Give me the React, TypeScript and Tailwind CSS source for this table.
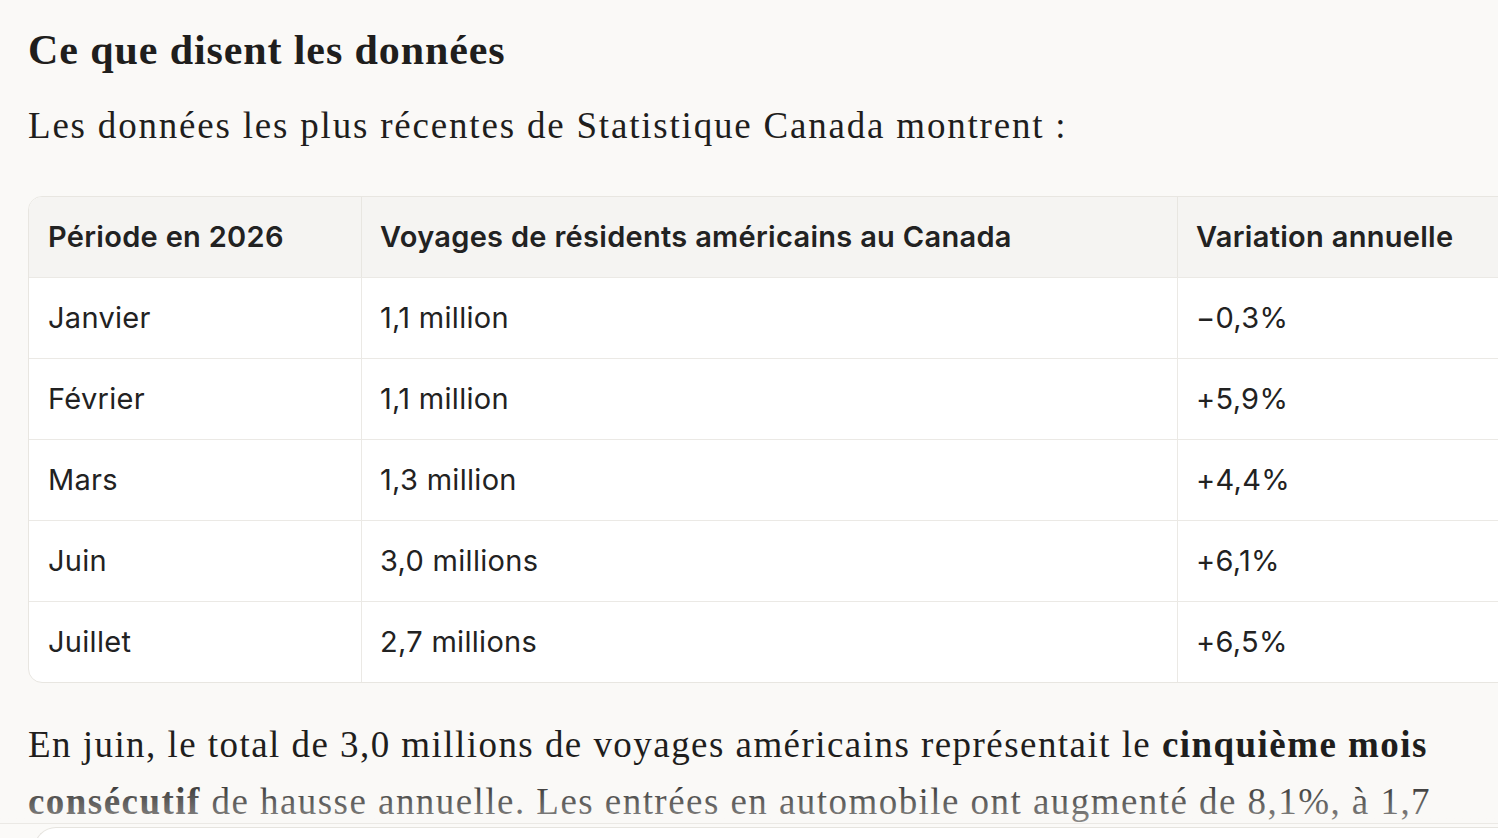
import React from 'react';

const rows = [
  { period: 'Janvier', trips: '1,1 million', change: '−0,3%' },
  { period: 'Février', trips: '1,1 million', change: '+5,9%' },
  { period: 'Mars', trips: '1,3 million', change: '+4,4%' },
  { period: 'Juin', trips: '3,0 millions', change: '+6,1%' },
  { period: 'Juillet', trips: '2,7 millions', change: '+6,5%' },
];

const serif = { fontFamily: '"Liberation Serif", "DejaVu Serif", serif' };

export default function App() {
  return (
    <div className="relative h-[838px] w-[1498px] overflow-hidden bg-[#faf9f7] text-[#1f1e1d]">
      <div className="pl-[28px] pt-[26px]">
        <h2 className="text-[42px] font-bold leading-[48px] tracking-[0.9px]" style={serif}>
          Ce que disent les données
        </h2>
        <p className="mt-[28px] text-[37px] leading-[48px] tracking-[1.8px]" style={serif}>
          Les données les plus récentes de Statistique Canada montrent :
        </p>

        <div className="mt-[46px] w-[1540px] overflow-hidden rounded-l-[14px] border border-[#e8e6e1] bg-white font-['Inter',sans-serif] text-[29px] tracking-[0.3px] text-[#222]">
          <div className="grid grid-cols-[332px_816px_1fr] bg-[#f5f4f2] font-semibold">
            <div className="flex h-[80px] items-center px-[19px]">Période en 2026</div>
            <div className="flex h-[80px] items-center border-l border-[#e8e6e1] px-[18px]">
              Voyages de résidents américains au Canada
            </div>
            <div className="flex h-[80px] items-center border-l border-[#e8e6e1] px-[18px]">
              Variation annuelle
            </div>
          </div>
          {rows.map((r) => (
            <div key={r.period} className="grid grid-cols-[332px_816px_1fr] border-t border-[#ebe9e5]">
              <div className="flex h-[80px] items-center px-[19px]">{r.period}</div>
              <div className="flex h-[80px] items-center border-l border-[#ebe9e5] px-[18px]">{r.trips}</div>
              <div className="flex h-[80px] items-center border-l border-[#ebe9e5] px-[18px]">{r.change}</div>
            </div>
          ))}
        </div>

        <p className="mt-[33px] w-[1440px] text-[37px] leading-[57px] tracking-[1.45px]" style={serif}>
          En juin, le total de 3,0 millions de voyages américains représentait le{' '}
          <strong className="font-bold">cinquième mois consécutif</strong> de hausse annuelle. Les entrées en
          automobile ont augmenté de 8,1%, à 1,7 million de voyages.
        </p>
      </div>

      <div className="pointer-events-none absolute inset-x-0 top-[772px] h-[51px] bg-gradient-to-b from-[#faf9f7]/0 to-[#faf9f7]/50" />
      <div className="absolute inset-x-0 top-[823px] h-[20px] border-t border-[#ebe9e5] bg-[#fbfaf8]">
        <div className="ml-[34px] mt-[3px] h-[40px] rounded-tl-[22px] border-l border-t border-[#e6e4df] bg-white" />
      </div>
    </div>
  );
}
